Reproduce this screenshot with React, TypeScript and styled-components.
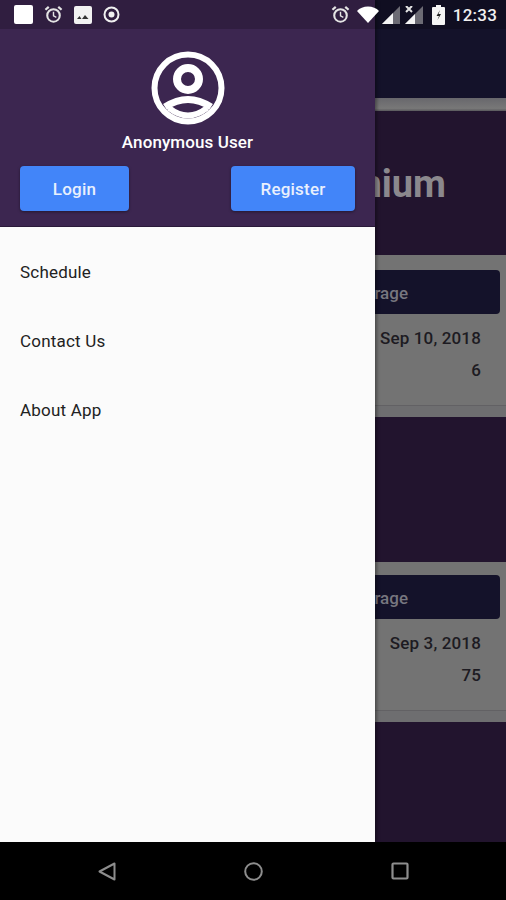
import React from 'react';
import styled, { createGlobalStyle } from 'styled-components';

const Global = createGlobalStyle`
  html, body { margin: 0; padding: 0; background: #000; }
  body { font-family: Roboto, "Liberation Sans", sans-serif; }
`;

const Phone = styled.div`
  position: relative;
  width: 506px;
  height: 900px;
  overflow: hidden;
  display: flex;
  flex-direction: column;
  background: #000;
`;

/* page behind the drawer, already dimmed by the scrim */
const Page = styled.div`
  flex: 1;
  display: flex;
  flex-direction: column;
  background: #22142e;
`;

const AppBar = styled.div`
  height: 98px;
  background: #14122a;
`;

const Strip = styled.div`
  height: 13px;
  background: linear-gradient(#68676c, #787878 80%, #59585c);
`;

const Title = styled.div`
  height: 144px;
  box-sizing: border-box;
  padding: 51px 60px 0 0;
  text-align: right;
  font-size: 38px;
  line-height: 44px;
  font-weight: 700;
  color: #8b888d;
`;

const Card = styled.div<{ $h: number; $pt: number }>`
  height: ${p => p.$h}px;
  box-sizing: border-box;
  padding: ${p => p.$pt}px 0 0 16px;
  display: flex;
  flex-direction: column;
  background: linear-gradient(90deg, #5e5e60, #737373 60%);
  color: #1d1b22;
`;

const CardBtn = styled.div`
  height: 44px;
  margin-right: 6px;
  box-sizing: border-box;
  padding: 1px 92px 0 0;
  display: flex;
  align-items: center;
  justify-content: flex-end;
  background: #14122a;
  border-radius: 4px;
  color: #77767f;
  font-size: 17px;
  font-weight: 500;
`;

const CardRow = styled.div<{ $mt: number }>`
  margin-top: ${p => p.$mt}px;
  padding-right: 25px;
  text-align: right;
  font-size: 17px;
  line-height: 20px;
  font-weight: 500;
  letter-spacing: 0.15px;
`;

const CardFoot = styled.div`
  margin: auto 0 0 -16px;
  height: 12px;
  box-sizing: border-box;
  border-top: 1px solid #626164;
  background: #6e6e70;
`;

const Gap = styled.div`
  height: 145px;
`;

const NavBar = styled.div`
  height: 58px;
  flex: none;
  box-sizing: border-box;
  background: #000;
  display: flex;
  align-items: center;
  justify-content: space-between;
  padding: 0 97px 0 98px;
`;

const Drawer = styled.div`
  position: absolute;
  left: 0;
  top: 0;
  bottom: 58px;
  width: 375px;
  display: flex;
  flex-direction: column;
  background: #fbfbfb;
  box-shadow: 2px 0 3px rgba(0, 0, 0, 0.35);
`;

const DrawerHead = styled.div`
  height: 227px;
  box-sizing: border-box;
  padding: 51px 20px 0;
  background: #3c2650;
  border-bottom: 1px solid #2a1a3a;
  display: flex;
  flex-direction: column;
  align-items: center;
`;

const UserName = styled.div`
  margin-top: 6px;
  color: #fff;
  font-size: 17px;
  line-height: 22px;
  font-weight: 500;
  letter-spacing: 0.1px;
`;

const Buttons = styled.div`
  align-self: stretch;
  margin-top: 13px;
  display: flex;
  justify-content: space-between;
`;

const Btn = styled.button<{ $w: number }>`
  width: ${p => p.$w}px;
  height: 45px;
  border: none;
  border-radius: 4px;
  background: #4285f9;
  color: #e9f0fd;
  font-family: inherit;
  font-size: 17px;
  font-weight: 500;
  letter-spacing: 0.2px;
  box-shadow: 0 1px 3px rgba(0, 0, 0, 0.4);
`;

const Menu = styled.div`
  display: flex;
  flex-direction: column;
  padding-top: 10px;
`;

const MenuItem = styled.div`
  height: 69px;
  padding-left: 20px;
  display: flex;
  align-items: center;
  font-size: 17px;
  color: #222;
  letter-spacing: 0.2px;
`;

const StatusBar = styled.div`
  position: absolute;
  left: 0;
  top: 0;
  right: 0;
  height: 29px;
  padding: 0 9px 0 14px;
  box-sizing: border-box;
  background: rgba(0, 0, 0, 0.2);
  display: flex;
  align-items: center;
  justify-content: space-between;
`;

const StatusLeft = styled.div`
  display: flex;
  align-items: center;
  gap: 11px;
`;

const StatusRight = styled.div`
  display: flex;
  align-items: center;
`;

const StatusIcon = styled.svg<{ $ml?: number }>`
  display: block;
  margin-left: ${p => p.$ml ?? 0}px;
`;

const Clock = styled.span`
  margin-left: 8px;
  color: #f0f0f0;
  font-size: 17px;
  font-weight: 500;
  letter-spacing: 0.2px;
`;

const AlarmIcon = ({ size }: { size: number }) => (
  <StatusIcon width={size} height={size} viewBox="0 0 20 20" fill="none" stroke="#e4e4e4">
    <circle cx="10" cy="11" r="6.6" strokeWidth="2.2" />
    <path d="M10 7v4.500l3 1.500" strokeWidth="1.500" />
    <path d="M1.500 5 5 2M18.500 5 15 2" strokeWidth="2.400" />
  </StatusIcon>
);

const Avatar = () => (
  <svg width="74" height="74" viewBox="0 0 74 74" fill="none" stroke="#fff">
    <circle cx="37" cy="37" r="33.500" strokeWidth="6" />
    <circle cx="37" cy="28" r="11" strokeWidth="8" />
    <path d="M14 56Q37 41 60 56" strokeWidth="7" />
    <path d="M18 57Q37 72 56 57" strokeWidth="6" />
  </svg>
);

const App: React.FC = () => (
  <Phone>
    <Global />
    <Page>
      <AppBar />
      <Strip />
      <Title>nium</Title>
      <Card $h={162} $pt={15}>
        <CardBtn>rage</CardBtn>
        <CardRow $mt={14}>Sep 10, 2018</CardRow>
        <CardRow $mt={12}>6</CardRow>
        <CardFoot />
      </Card>
      <Gap />
      <Card $h={160} $pt={13}>
        <CardBtn>rage</CardBtn>
        <CardRow $mt={14}>Sep 3, 2018</CardRow>
        <CardRow $mt={12}>75</CardRow>
        <CardFoot />
      </Card>
    </Page>
    <NavBar>
      <svg width="18" height="19" viewBox="0 0 18 19" fill="none" stroke="#8d8d8d" strokeWidth="2" strokeLinejoin="round">
        <path d="M16.500 1.500v16L1.500 9.500z" />
      </svg>
      <svg width="19" height="19" viewBox="0 0 19 19" fill="none" stroke="#8d8d8d" strokeWidth="2">
        <circle cx="9.500" cy="9.500" r="8.300" />
      </svg>
      <svg width="18" height="18" viewBox="0 0 18 18" fill="none" stroke="#8d8d8d" strokeWidth="2.200" strokeLinejoin="round">
        <rect x="1.500" y="1.500" width="15" height="15" rx="1" />
      </svg>
    </NavBar>
    <Drawer>
      <DrawerHead>
        <Avatar />
        <UserName>Anonymous User</UserName>
        <Buttons>
          <Btn $w={109}>Login</Btn>
          <Btn $w={124}>Register</Btn>
        </Buttons>
      </DrawerHead>
      <Menu>
        <MenuItem>Schedule</MenuItem>
        <MenuItem>Contact Us</MenuItem>
        <MenuItem>About App</MenuItem>
      </Menu>
    </Drawer>
    <StatusBar>
      <StatusLeft>
        <StatusIcon width="19" height="19" viewBox="0 0 19 19"><rect width="19" height="19" rx="2" fill="#fff" /></StatusIcon>
        <AlarmIcon size={19} />
        <StatusIcon width="18" height="18" viewBox="0 0 18 18">
          <rect width="18" height="18" rx="2" fill="#f2f2f2" />
          <path d="M3 13l2.500-3 2 3zM8 13l3-4 3.500 4z" fill="#333" />
        </StatusIcon>
        <StatusIcon width="17" height="17" viewBox="0 0 17 17" fill="none" stroke="#f0f0f0">
          <circle cx="8.500" cy="8.500" r="7" strokeWidth="2" />
          <circle cx="8.500" cy="8.500" r="3" fill="#f0f0f0" strokeWidth="0" />
        </StatusIcon>
      </StatusLeft>
      <StatusRight>
        <AlarmIcon size={19} />
        <StatusIcon $ml={7} width="22" height="17" viewBox="0 0 22 17">
          <path d="M0 5C5-1 17-1 22 5L11 17z" fill="#fff" />
        </StatusIcon>
        <StatusIcon $ml={3} width="18" height="18" viewBox="0 0 18 18">
          <path d="M18 0v18H0z" fill="#6c6b74" />
          <path d="M11 7v11H0z" fill="#f4f4f4" />
        </StatusIcon>
        <StatusIcon $ml={5} width="18" height="18" viewBox="0 0 18 18">
          <path d="M18 0v18H0z" fill="#6c6b74" />
          <path d="M10 8v10H0z" fill="#f4f4f4" />
          <path d="M1 0l6 6M7 0L1 6" stroke="#e4e4e4" strokeWidth="2" />
        </StatusIcon>
        <StatusIcon $ml={9} width="13" height="20" viewBox="0 0 13 20">
          <path d="M4 0h5v2h3a1 1 0 0 1 1 1v16a1 1 0 0 1-1 1H1a1 1 0 0 1-1-1V3a1 1 0 0 1 1-1h3z" fill="#f5f5f5" />
          <path d="M8 5 4.500 11h2.500l-1.500 4 3.500-6H6.500z" fill="#222" />
        </StatusIcon>
        <Clock>12:33</Clock>
      </StatusRight>
    </StatusBar>
  </Phone>
);

export default App;
